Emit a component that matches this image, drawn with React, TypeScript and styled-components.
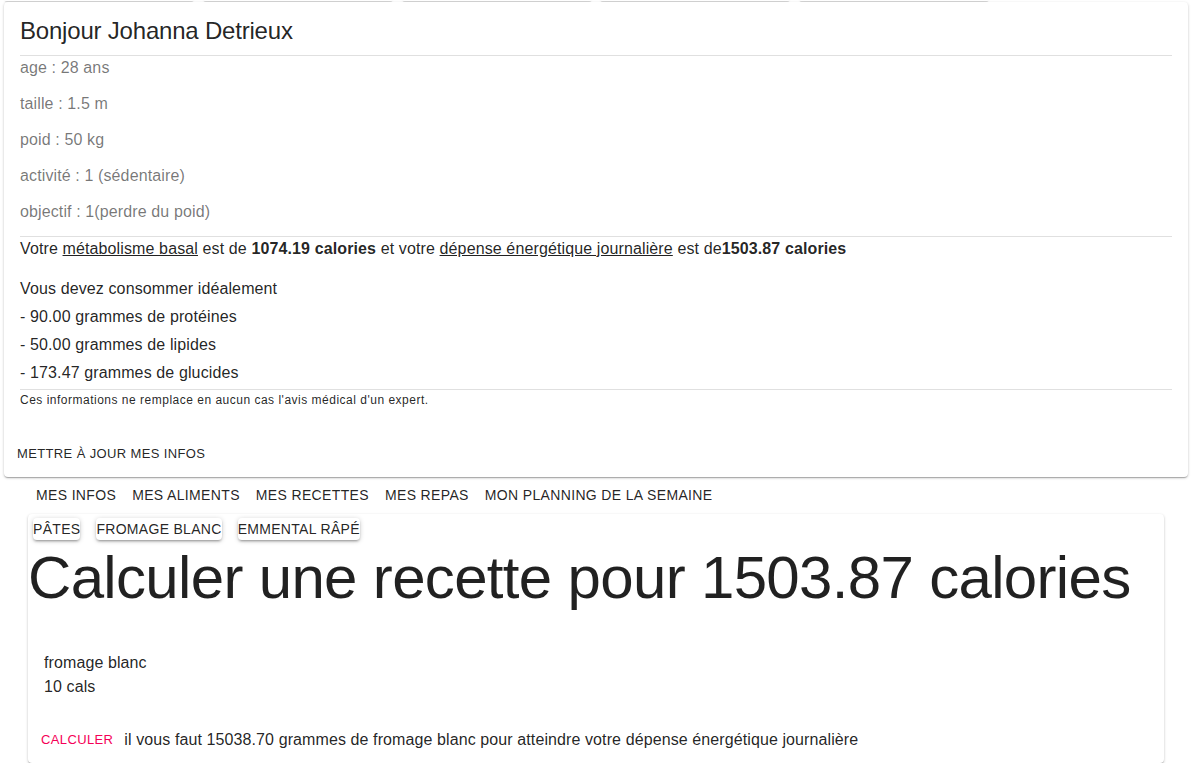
import React from "react";
import styled, { createGlobalStyle } from "styled-components";

const GlobalStyle = createGlobalStyle`
  html, body {
    margin: 0;
    padding: 0;
    background: #ffffff;
    font-family: "Liberation Sans", Arial, Helvetica, sans-serif;
    color: rgba(0, 0, 0, 0.87);
  }
  * { box-sizing: border-box; }
`;

const shadow1 =
  "0px 1px 3px 0px rgba(0,0,0,0.2), 0px 1px 1px 0px rgba(0,0,0,0.14), 0px 2px 1px -1px rgba(0,0,0,0.12)";
const shadow2 =
  "0px 1px 5px 0px rgba(0,0,0,0.2), 0px 2px 2px 0px rgba(0,0,0,0.14), 0px 3px 1px -2px rgba(0,0,0,0.12)";

const Page = styled.div`
  padding: 0 4px;
  display: flex;
  flex-direction: column;
`;

const StubRow = styled.div`
  display: flex;
  gap: 10.75px;
  padding-left: 1px;
  margin-bottom: 1px;
`;

const Stub = styled.div`
  width: 188px;
  height: 1px;
  background: #fff;
  border-radius: 0 0 4px 4px;
  box-shadow: ${shadow1};
`;

const Card = styled.div<{ $inset?: number }>`
  background: #fff;
  border-radius: 4px;
  box-shadow: ${shadow1};
  margin: 0 ${(p) => p.$inset ?? 0}px;
  display: flex;
  flex-direction: column;
`;

const Header = styled.div`
  padding: 13px 16px 8px;
`;

const Title = styled.h1`
  margin: 0;
  font-size: 24px;
  line-height: 32px;
  font-weight: 400;
  letter-spacing: -0.2px;
  color: rgba(0, 0, 0, 0.87);
`;

const Content = styled.div`
  padding: 0 16px;
  display: flex;
  flex-direction: column;
`;

const Divider = styled.hr`
  margin: 0;
  border: none;
  height: 1px;
  background: rgba(0, 0, 0, 0.12);
`;

const InfoLine = styled.p`
  margin: 0 0 12px;
  font-size: 16px;
  line-height: 24px;
  letter-spacing: 0.12px;
  color: rgba(0, 0, 0, 0.54);
`;

const Body = styled.p<{ $mb?: number }>`
  margin: 0 0 ${(p) => p.$mb ?? 0}px;
  font-size: 16px;
  line-height: 24px;
  letter-spacing: 0.12px;
  color: rgba(0, 0, 0, 0.87);
  white-space: nowrap;
`;

const Term = styled.span`
  text-decoration: underline;
`;

const Caption = styled.p`
  margin: 0;
  font-size: 12px;
  line-height: 20px;
  letter-spacing: 0.5px;
  color: rgba(0, 0, 0, 0.87);
`;

const Actions = styled.div<{ $top?: number }>`
  display: flex;
  align-items: center;
  gap: 6px;
  padding: 8px;
  margin-top: ${(p) => p.$top ?? 0}px;
`;

const SmallButton = styled.button<{ $tone?: "dark" | "pink" }>`
  border: none;
  background: transparent;
  padding: 4px 5px;
  font-family: inherit;
  font-size: 13px;
  line-height: 22px;
  letter-spacing: 0.37px;
  text-transform: uppercase;
  color: ${(p) => (p.$tone === "pink" ? "#f50057" : "rgba(0, 0, 0, 0.87)")};
  cursor: pointer;
`;

const Nav = styled.nav`
  display: flex;
  padding: 0 24px;
  margin-bottom: 1px;
`;

const NavButton = styled.button`
  border: none;
  background: transparent;
  padding: 6px 8px;
  font-family: inherit;
  font-size: 14px;
  line-height: 24px;
  letter-spacing: 0.35px;
  text-transform: uppercase;
  color: rgba(0, 0, 0, 0.87);
  cursor: pointer;
`;

const ChipRow = styled.div`
  display: flex;
  gap: 16px;
  padding: 4px 5px 0;
`;

const FoodButton = styled.button`
  border: none;
  background: #fff;
  padding: 0;
  border-radius: 4px;
  box-shadow: ${shadow2};
  font-family: inherit;
  font-size: 14px;
  line-height: 22px;
  letter-spacing: 0.3px;
  text-transform: uppercase;
  color: rgba(0, 0, 0, 0.87);
  cursor: pointer;
`;

const BigHeading = styled.h2`
  margin: 2px 0 0;
  font-size: 60px;
  line-height: 72px;
  font-weight: 400;
  letter-spacing: -0.67px;
  color: rgba(0, 0, 0, 0.87);
  white-space: nowrap;
`;

const FoodInfo = styled.div`
  padding: 37px 16px 0;
  display: flex;
  flex-direction: column;
`;

const ResultText = styled.span`
  font-size: 16px;
  line-height: 24px;
  letter-spacing: 0.1px;
  color: rgba(0, 0, 0, 0.87);
`;

const infos = [
  "age : 28 ans",
  "taille : 1.5 m",
  "poid : 50 kg",
  "activité : 1 (sédentaire)",
  "objectif : 1(perdre du poid)",
];

const macros = [
  "- 90.00 grammes de protéines",
  "- 50.00 grammes de lipides",
  "- 173.47 grammes de glucides",
];

const tabs = ["Mes infos", "Mes aliments", "Mes recettes", "Mes repas", "Mon planning de la semaine"];
const foods = ["Pâtes", "Fromage blanc", "Emmental râpé"];

export default function App() {
  return (
    <>
      <GlobalStyle />
      <Page>
        <StubRow>
          {[0, 1, 2, 3, 4].map((i) => (
            <Stub key={i} />
          ))}
        </StubRow>
        <Card>
          <Header>
            <Title>Bonjour Johanna Detrieux</Title>
          </Header>
          <Content>
            <Divider />
            {infos.map((t) => (
              <InfoLine key={t}>{t}</InfoLine>
            ))}
            <Divider />
            <Body $mb={16}>
              Votre <Term>métabolisme basal</Term> est de <b>1074.19 calories</b> et votre{" "}
              <Term>dépense énergétique journalière</Term> est de<b>1503.87 calories</b>
            </Body>
            <Body $mb={4}>Vous devez consommer idéalement</Body>
            {macros.map((m) => (
              <Body key={m} $mb={4}>
                {m}
              </Body>
            ))}
            <Divider />
            <Caption>Ces informations ne remplace en aucun cas l'avis médical d'un expert.</Caption>
          </Content>
          <Actions $top={21}>
            <SmallButton>Mettre à jour mes infos</SmallButton>
          </Actions>
        </Card>
        <Nav>
          {tabs.map((t) => (
            <NavButton key={t}>{t}</NavButton>
          ))}
        </Nav>
        <Card $inset={24}>
          <ChipRow>
            {foods.map((f) => (
              <FoodButton key={f}>{f}</FoodButton>
            ))}
          </ChipRow>
          <BigHeading>Calculer une recette pour 1503.87 calories</BigHeading>
          <FoodInfo>
            <ResultText>fromage blanc</ResultText>
            <ResultText>10 cals</ResultText>
          </FoodInfo>
          <Actions $top={18}>
            <SmallButton $tone="pink">Calculer</SmallButton>
            <ResultText>
              il vous faut 15038.70 grammes de fromage blanc pour atteindre votre dépense énergétique journalière
            </ResultText>
          </Actions>
        </Card>
      </Page>
    </>
  );
}
